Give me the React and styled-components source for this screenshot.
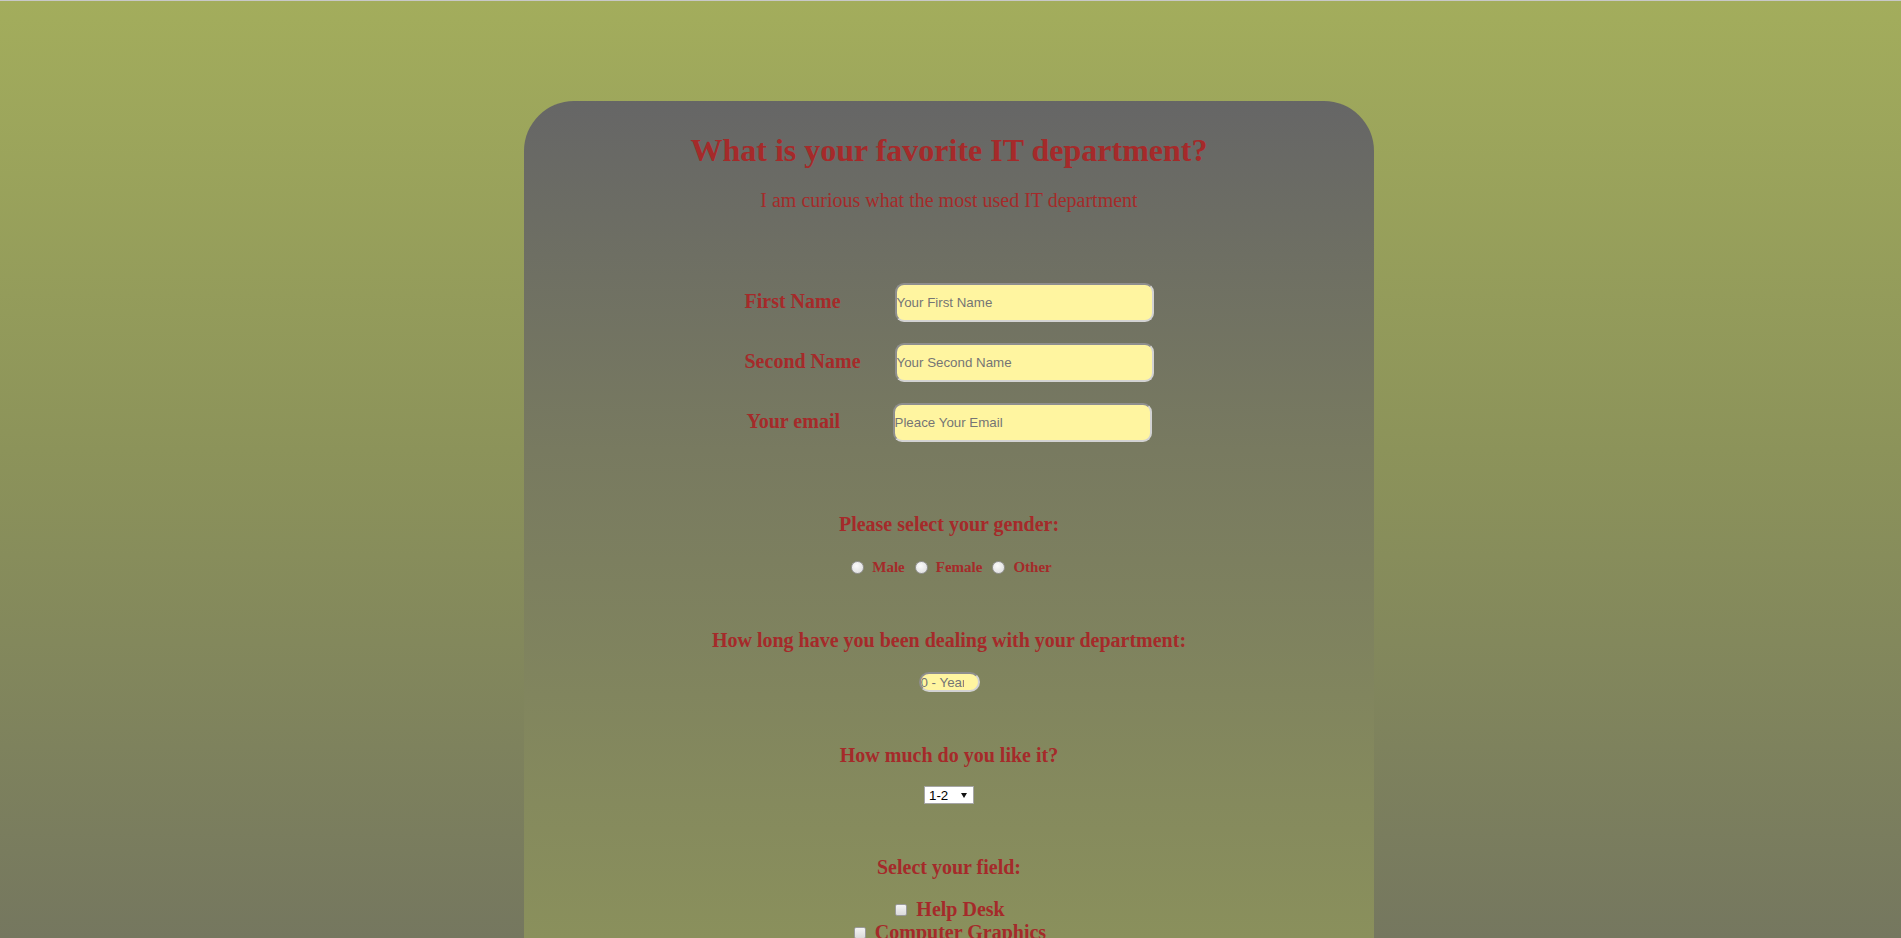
import React from "react";
import styled, { createGlobalStyle } from "styled-components";

const GlobalStyle = createGlobalStyle`
    html,
    body {
        margin: 0;
    }

    body {
        min-height: 100vh;
        border-top: 1px solid #c8c8c8;
        background: linear-gradient(
                to bottom,
                #a3ad5c 0px,
                #8c935a 450px,
                #75775f 938px
            )
            no-repeat;
        background-color: #75775f;
        font-family: "Liberation Serif", "Times New Roman", serif;
    }
`;

const App = () => {
    const fields = [
        { id: "first", label: "First Name", placeholder: "Your First Name" },
        { id: "second", label: "Second Name", placeholder: "Your Second Name" },
        {
            id: "email",
            label: "Your email",
            placeholder: "Pleace Your Email",
            type: "email",
            labelShift: 2,
            inputShift: -2,
        },
    ];
    const genders = ["Male", "Female", "Other"];
    const ratings = ["1-2", "3-4", "5-6", "7-8", "9-10"];
    const departments = [
        "Help Desk",
        "Computer Graphics",
        "Networking",
        "Web Development",
        "Cyber Security",
    ];

    return (
        <Page>
            <GlobalStyle />
            <Card>
                <Title>What is your favorite IT department?</Title>
                <Subtitle>I am curious what the most used IT department</Subtitle>

                <Fields>
                    {fields.map((f) => (
                        <FieldRow key={f.id}>
                            <FieldLabel htmlFor={f.id} $shift={f.labelShift || 0}>
                                {f.label}
                            </FieldLabel>
                            <TextInput
                                id={f.id}
                                type={f.type || "text"}
                                placeholder={f.placeholder}
                                $shift={f.inputShift || 0}
                            />
                        </FieldRow>
                    ))}
                </Fields>

                <Question $gap={71}>Please select your gender:</Question>
                <RadioRow>
                    {genders.map((g) => (
                        <Option key={g}>
                            <Radio type="radio" name="gender" value={g} />
                            {g}
                        </Option>
                    ))}
                </RadioRow>

                <Question $gap={53}>
                    How long have you been dealing with your department:
                </Question>
                <YearsInput type="text" placeholder="0 - Years" />

                <Question $gap={52}>How much do you like it?</Question>
                <SelectWrap>
                    <Select defaultValue="1-2">
                        {ratings.map((r) => (
                            <option key={r} value={r}>
                                {r}
                            </option>
                        ))}
                    </Select>
                </SelectWrap>

                <Question $gap={52}>Select your field:</Question>
                <CheckList>
                    {departments.map((d) => (
                        <CheckLine key={d}>
                            <CheckBox type="checkbox" value={d} />
                            {d}
                        </CheckLine>
                    ))}
                </CheckList>

                <Submit type="button">Send</Submit>
            </Card>
        </Page>
    );
};

export default App;

const Page = styled.div`
    padding: 100px 3px 0 0;
`;

const Card = styled.div`
    width: 850px;
    margin: 0 auto;
    padding: 31px 0 80px;
    box-sizing: border-box;
    border-radius: 50px;
    background: linear-gradient(
        to bottom,
        #666666 0px,
        #787a60 349px,
        #8a905c 837px
    );
    background-color: #8a905c;
    color: #a52a2a;
    text-align: center;
`;

const Title = styled.h1`
    margin: 0;
    font-size: 32px;
    font-weight: bold;
    line-height: normal;
`;

const Subtitle = styled.p`
    margin: 20px 0 0;
    font-size: 20px;
    line-height: normal;
`;

const Fields = styled.div`
    display: flex;
    flex-direction: column;
    align-items: center;
    gap: 21px;
    margin-top: 71px;
`;

const FieldRow = styled.div`
    display: grid;
    grid-template-columns: 150px 259px;
    align-items: center;
    text-align: left;
`;

const FieldLabel = styled.label`
    margin-bottom: 2px;
    padding-left: ${(p) => p.$shift}px;
    font-size: 20px;
    font-weight: bold;
    line-height: 23px;
`;

const TextInput = styled.input`
    width: 259px;
    height: 39px;
    margin-left: ${(p) => p.$shift}px;
    padding: 0;
    box-sizing: border-box;
    border: 2px solid;
    border-color: #8e8e8e #d2d2d2 #d2d2d2 #8e8e8e;
    border-radius: 9px;
    background: #fff5a0;
    font-family: "Liberation Sans", Arial, sans-serif;
    font-size: 13.33px;
    color: #333;
    outline: none;

    &::placeholder {
        color: #757575;
    }
`;

const Question = styled.h3`
    margin: ${(p) => p.$gap}px 0 0;
    font-size: 20px;
    font-weight: bold;
    line-height: 23px;
`;

const RadioRow = styled.div`
    display: flex;
    justify-content: center;
    align-items: center;
    height: 17px;
    margin-top: 23px;
    padding-left: 5px;
`;

const Option = styled.label`
    display: flex;
    align-items: center;
    margin-left: 10px;
    font-size: 15px;
    font-weight: bold;
    line-height: 17px;

    &:first-child {
        margin-left: 0;
    }
`;

const Radio = styled.input`
    appearance: none;
    width: 13px;
    height: 13px;
    margin: -1px 8px 0 0;
    border: 1px solid #979797;
    border-radius: 50%;
    background: radial-gradient(circle at 40% 35%, #fbfbfb, #d9d9d9);
    box-sizing: border-box;
`;

const YearsInput = styled.input`
    display: block;
    width: 61px;
    height: 20px;
    margin: 20px auto 0;
    padding: 0 14px 0 0;
    box-sizing: border-box;
    border: 2px solid;
    border-color: #8e8e8e #d2d2d2 #d2d2d2 #8e8e8e;
    border-radius: 10px;
    background: #fff5a0;
    font-family: "Liberation Sans", Arial, sans-serif;
    font-size: 13.33px;
    outline: none;

    &::placeholder {
        color: #757575;
    }
`;

const SelectWrap = styled.div`
    position: relative;
    width: 50px;
    height: 18px;
    margin: 19px auto 0;

    &::after {
        content: "";
        position: absolute;
        top: 7px;
        right: 7px;
        border-left: 3px solid transparent;
        border-right: 3px solid transparent;
        border-top: 5px solid #111;
        pointer-events: none;
    }
`;

const Select = styled.select`
    appearance: none;
    display: block;
    width: 50px;
    height: 18px;
    margin: 0;
    padding: 0 0 0 4px;
    box-sizing: border-box;
    border: 1px solid #a6a6a6;
    border-radius: 0;
    background: #fff;
    color: #000;
    font-family: "Liberation Sans", Arial, sans-serif;
    font-size: 13.33px;
    outline: none;
`;

const CheckList = styled.div`
    margin-top: 19px;
    padding-left: 2px;
`;

const CheckLine = styled.label`
    display: flex;
    justify-content: center;
    align-items: center;
    height: 23px;
    font-size: 20px;
    font-weight: bold;
    line-height: 23px;
`;

const CheckBox = styled.input`
    appearance: none;
    width: 12px;
    height: 12px;
    margin: 0 9px 0 0;
    box-sizing: border-box;
    border: 1px solid #9a9a9a;
    border-radius: 2px;
    background: linear-gradient(to bottom, #f4f4f4, #dadada);
`;

const Submit = styled.button`
    margin-top: 40px;
    padding: 6px 24px;
    border: 2px solid #8e8e8e;
    border-radius: 10px;
    background: #fff5a0;
    color: #a52a2a;
    font-family: "Liberation Serif", "Times New Roman", serif;
    font-size: 18px;
    font-weight: bold;
`;
